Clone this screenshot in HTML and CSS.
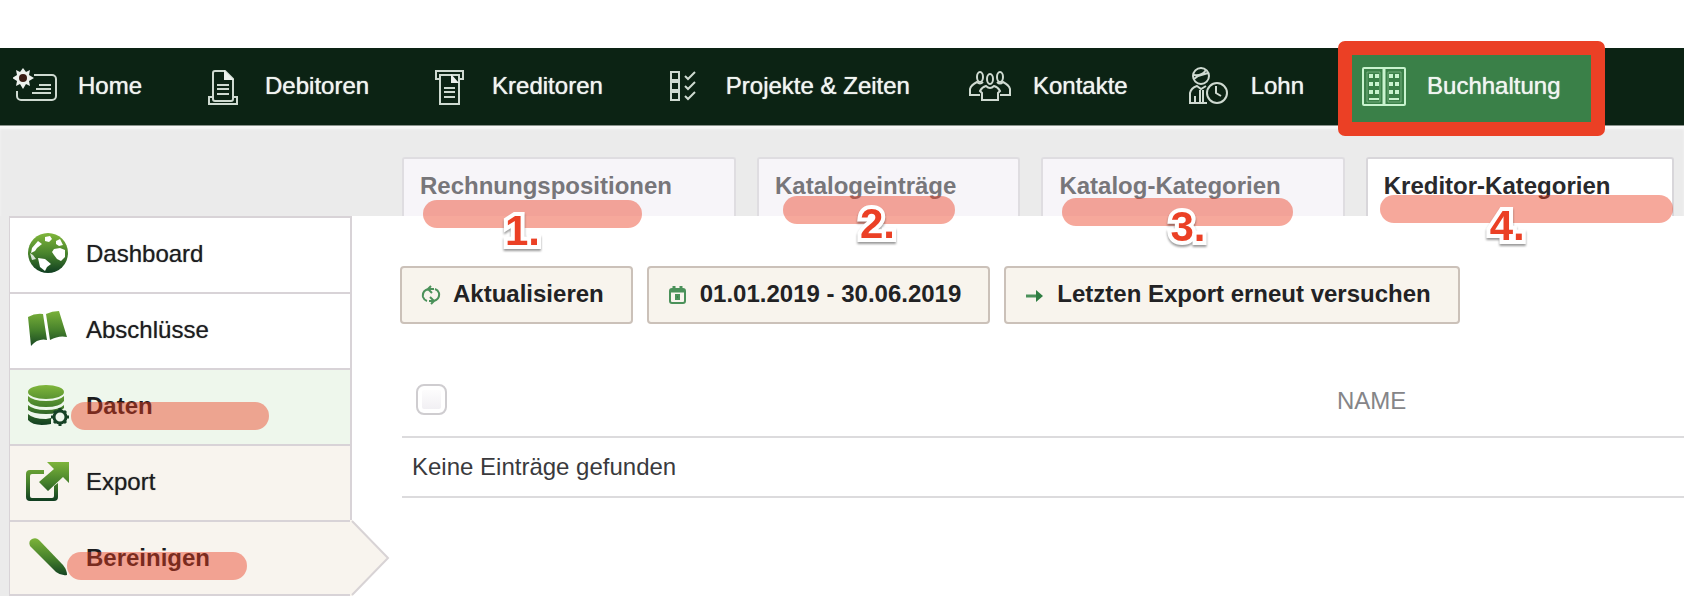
FILE: index.html
```html
<!DOCTYPE html>
<html lang="de">
<head>
    <meta charset="UTF-8">
    <meta name="viewport" content="width=device-width, initial-scale=1.0">
    <title>Buchhaltung - Kreditor-Kategorien</title>
    <link rel="stylesheet" href="styles.css">
</head>
<body>
    <nav class="topnav">
        <a class="nav-item" href="#">
            <svg class="nav-icon" viewBox="0 0 44 44">
                <path d="M21 11h18a4 4 0 0 1 4 4v17a4 4 0 0 1-4 4H8a4 4 0 0 1-4-4v-5" stroke-width="2"/>
                <path d="M26 21h12M23 25h15M19 29h19" stroke-width="2"/>
                <path class="fill" d="M10 4l3 4 4-2-1 5 5 3-5 3 1 5-4-2-3 5-3-5-4 2 1-5-5-3 5-3-1-5 4 2z"/>
                <circle cx="10" cy="14" r="4" fill="#3a1c14" stroke="none"/>
            </svg>
            <span>Home</span>
        </a>
        <a class="nav-item" href="#">
            <svg class="nav-icon" viewBox="0 0 44 44">
                <path d="M13 35V9a2 2 0 0 1 2-2h10l8 8v20a2 2 0 0 1-2 2H15a2 2 0 0 1-2-2z" stroke-width="2"/>
                <path class="fill" d="M24 6l10 10H24z"/>
                <path d="M17 21h12M17 25h12M17 30h12" stroke-width="2"/>
                <path d="M12 33H9v7h28v-7h-3" stroke-width="2"/>
            </svg>
            <span>Debitoren</span>
        </a>
        <a class="nav-item" href="#">
            <svg class="nav-icon" viewBox="0 0 44 44">
                <path d="M12 15H9V7h27v8h-3" stroke-width="2"/>
                <path d="M13 11h19v29H13z" stroke-width="2"/>
                <path class="fill" d="M24 10l8 9h-8z"/>
                <path d="M17 24h11M17 28h11M17 33h11" stroke-width="2"/>
            </svg>
            <span>Kreditoren</span>
        </a>
        <a class="nav-item" href="#">
            <svg class="nav-icon" viewBox="0 0 44 44">
                <path d="M10 8h8v8h-8zM10 18h8v8h-8zM10 28h8v8h-8z" stroke-width="2"/>
                <path d="M24 12l3 3 7-7M24 22l3 3 7-7M24 32l3 3 7-7" stroke-width="2"/>
            </svg>
            <span>Projekte &amp; Zeiten</span>
        </a>
        <a class="nav-item" href="#">
            <svg class="nav-icon" viewBox="0 0 44 44">
                <ellipse cx="12" cy="13" rx="3" ry="5"/>
                <ellipse cx="22" cy="15" rx="3" ry="5"/>
                <ellipse cx="32" cy="13" rx="3" ry="5"/>
                <path d="M12 31H2v-6q1-4 7-7 3 3 6 0M32 31h10v-6q-1-4-7-7-3 3-6 0"/>
                <path d="M14 36v-7l-2-2q2-4 6-5 4 4 8 0 4 1 6 5l-2 2v7z"/>
            </svg>
            <span>Kontakte</span>
        </a>
        <a class="nav-item" href="#">
            <svg class="nav-icon" viewBox="0 0 44 44">
                <circle cx="15" cy="12" r="8"/>
                <path d="M8 11q8 1 12-5M8 15l4-3 10-3"/>
                <path d="M21 39H4V29q1-5 7-7l4 3 5-3M9 32v7M14 26v13M17 26v13"/>
                <circle cx="31" cy="29" r="10"/>
                <path d="M30 22v7l5 3"/>
            </svg>
            <span>Lohn</span>
        </a>
        <a class="nav-item active" href="#">
            <svg class="nav-icon" viewBox="0 0 44 44">
                <rect x="1" y="4" width="42" height="37" rx="1" stroke-width="2"/>
                <path d="M22 4v37" stroke-width="3"/>
                <path d="M5 38V8h13v30zM26 38V8h13v30z" stroke-width="1" opacity=".4"/>
                <path d="M7 12h4m2 0h4M7 20h4m2 0h4M7 28h4m2 0h4M27 12h4m2 0h4M27 20h4m2 0h4M27 28h4m2 0h4" stroke-width="4"/>
                <path d="M7 35h10M27 35h10" stroke-width="2"/>
            </svg>
            <span>Buchhaltung</span>
        </a>
    </nav>

    <div class="tabs">
        <a class="tab" href="#">Rechnungspositionen<span class="marker marker-1"><b>1.</b></span></a>
        <a class="tab" href="#">Katalogeinträge<span class="marker marker-2"><b>2.</b></span></a>
        <a class="tab" href="#">Katalog-Kategorien<span class="marker marker-3"><b>3.</b></span></a>
        <a class="tab active" href="#">Kreditor-Kategorien<span class="marker marker-4"><b>4.</b></span></a>
    </div>

    <div class="workspace">
        <aside class="sidebar">
            <svg class="defs" width="0" height="0">
                <linearGradient id="leaf" gradientUnits="userSpaceOnUse" x1="0" y1="2" x2="0" y2="42">
                    <stop offset="0" stop-color="#7db43a"/>
                    <stop offset=".5" stop-color="#47822c"/>
                    <stop offset="1" stop-color="#0d3a20"/>
                </linearGradient>
            </svg>
            <a class="side-item" href="#">
                <svg class="side-icon" viewBox="0 0 44 44">
                    <circle cx="22" cy="21" r="20"/>
                    <path fill="#fff" d="M6 16l6-7 4 3-5 4-2 3-4 2zM19 5l5-1 2 3-3 3-4-1zM30 9l4-2 3 6-4 1-3-2zM28 17l6-1 5 2v7l-4 4-4-2-3-4-2-3zM12 26l7 1 6 5-4 3-2 4-5-4z"/>
                    <path fill="#fff" d="M4 21l3 2 3 4-4 1z" opacity=".8"/>
                </svg>
                <span>Dashboard</span>
            </a>
            <a class="side-item" href="#">
                <svg class="side-icon" viewBox="0 0 44 44">
                    <path d="M2 9q7-4 15-3l4 26q-9-2-16 6zM20 6q6-3 13-3l8 26q-8-2-17 3z"/>
                </svg>
                <span>Abschlüsse</span>
            </a>
            <a class="side-item current" href="#">
                <svg class="side-icon" viewBox="0 0 44 44">
                    <ellipse cx="20" cy="8" rx="18" ry="7"/>
                    <path d="M2 12q5 5 18 5t18-5v5q-4 6-18 6T2 17zM2 21q5 5 18 5t18-5v3q-5 6-18 6T2 26zM2 30q5 5 18 5l5-1v6q-17 3-23-4z"/>
                    <circle cx="34" cy="33" r="6" fill="none" stroke="#164326" stroke-width="3"/>
                    <path d="M34 24v4m0 10v4m-9-9h4m10 0h4M28 27l2 2m8 8l2 2m0-12l-2 2m-8 8l-2 2" stroke="#164326" stroke-width="3"/>
                </svg>
                <span>Daten</span>
                <i class="marker marker-data"></i>
            </a>
            <a class="side-item sub" href="#">
                <svg class="side-icon" viewBox="0 0 44 44">
                    <path d="M18 10v4H6q-2 0-2 2v20q0 2 2 2h20q2 0 2-2V26l4-3v14q0 4-4 4H4q-4 0-4-4V14q0-4 4-4z"/>
                    <path d="M21 2h22v21l-6-6-15 14-9-9 15-13z"/>
                </svg>
                <span>Export</span>
            </a>
            <a class="side-item sub current last" href="#">
                <svg class="side-icon" viewBox="0 0 44 44">
                    <path d="M4 10q-2-5 2-7 4-2 7 1l24 25q4 5 4 10-6 1-11-3z"/>
                </svg>
                <span>Bereinigen</span>
                <i class="marker marker-clean"></i>
                <svg class="arrow" viewBox="0 0 40 76">
                    <path d="M0 0h2l36 38-36 38H0z" fill="#f8f4ee"/>
                    <path d="M2 1l36 37L2 75" fill="none" stroke="#d8d3d5" stroke-width="2"/>
                </svg>
            </a>
        </aside>

        <main class="content">
            <div class="toolbar">
                <button class="btn" type="button">
                    <svg class="btn-icon" viewBox="0 0 20 20">
                        <path d="M7 4Q1 6 2 12q1 3 4 4M13 16q6-2 5-8-1-3-4-4M10 1L7 4l4 4M7 4h6M10 19l3-3-4-4M13 16H8"/>
                    </svg>
                    Aktualisieren
                </button>
                <button class="btn" type="button">
                    <svg class="btn-icon" viewBox="0 0 20 20">
                        <rect x="2" y="4" width="15" height="14" rx="2"/>
                        <path d="M2 6h15M6 1v4M13 1v4" stroke-width="3"/>
                        <path d="M8 10h3v4H8z" fill="#3b8048"/>
                    </svg>
                    01.01.2019 - 30.06.2019
                </button>
                <button class="btn" type="button">
                    <svg class="btn-icon" viewBox="0 0 20 20">
                        <path d="M1 11h13" stroke-width="3"/>
                        <path d="M11 5l7 6-7 6z" fill="#2f7d42" stroke="none"/>
                    </svg>
                    Letzten Export erneut versuchen
                </button>
            </div>

            <table class="entries">
                <thead>
                    <tr>
                        <th class="col-check"><input class="check" type="checkbox" aria-label="Alle auswählen"></th>
                        <th>NAME</th>
                    </tr>
                </thead>
                <tbody>
                    <tr>
                        <td colspan="2">Keine Einträge gefunden</td>
                    </tr>
                </tbody>
            </table>
        </main>
    </div>
</body>
</html>
```
FILE: styles.css
```css
* {
    margin: 0;
    padding: 0;
    box-sizing: border-box;
}

body {
    padding-top: 48px;
    background: #fff;
    color: #1c1c1e;
    font-family: "Liberation Sans", Arial, Helvetica, sans-serif;
    font-size: 24px;
    line-height: 28px;
}

a {
    color: inherit;
    text-decoration: none;
}

/* top navigation */
.topnav {
    position: relative;
    z-index: 2;
    display: flex;
    gap: 18px;
    padding: 7px 3px 3px;
    background: #0c2314;
    color: #f1f5f1;
    border-bottom: 1px solid #8b938d;
    white-space: nowrap;
}

.nav-item {
    position: relative;
    display: flex;
    align-items: center;
    gap: 21px;
    height: 67px;
    padding: 0 30px 5px 10px;
    text-shadow: 0 0 1px #f1f5f1;
}

.nav-item.active {
    background: #3a8048;
}

.nav-item.active::after {
    content: "";
    position: absolute;
    inset: -14px;
    border: 14px solid #eb4025;
    border-radius: 7px;
}

.nav-icon {
    flex: none;
    width: 44px;
    height: 44px;
    fill: none;
    stroke: #cfdad1;
    stroke-width: 2;
}

.nav-icon .fill {
    fill: #edf1ed;
    stroke: none;
}

.active .nav-icon {
    stroke: #c9f3cf;
}

/* tabs */
.tabs {
    position: relative;
    z-index: 1;
    display: flex;
    gap: 21px;
    padding: 31px 8px 0 402px;
    background: #ebebeb;
    box-shadow: inset 0 3px 2px #f8f8f8;
    white-space: nowrap;
}

.tab {
    position: relative;
    height: 59px;
    padding: 13px 62px 0 16px;
    background: #f7f5f9;
    border: 2px solid #dfdde1;
    border-bottom: 0;
    border-radius: 3px 3px 0 0;
    color: #77767a;
    font-weight: bold;
}

.tab.active {
    background: #fff;
    border-color: #d8d6da;
    color: #29292c;
}

/* red marker strokes with step numbers */
.marker {
    position: absolute;
    height: 28px;
    border-radius: 14px;
    background: rgba(234, 62, 34, 0.45);
}

.marker b {
    position: absolute;
    color: #eb4025;
    font-size: 42px;
    line-height: 42px;
    -webkit-text-stroke: 8px #fff;
    paint-order: stroke fill;
    stroke-linejoin: round;
    filter: drop-shadow(0 2px 1px rgba(0, 0, 0, 0.4));
}

.marker-1 {
    left: 19px;
    top: 41px;
    width: 219px;
}

.marker-1 b {
    left: 82px;
    top: 10px;
}

.marker-2 {
    left: 24px;
    top: 37px;
    width: 172px;
}

.marker-2 b {
    left: 77px;
    top: 7px;
}

.marker-3 {
    left: 19px;
    top: 39px;
    width: 231px;
}

.marker-3 b {
    left: 108px;
    top: 8px;
}

.marker-4 {
    left: 12px;
    top: 36px;
    width: 293px;
}

.marker-4 b {
    left: 110px;
    top: 10px;
}

.marker-data {
    left: 61px;
    top: 32px;
    width: 198px;
}

.marker-clean {
    left: 57px;
    top: 30px;
    width: 180px;
}

/* sidebar */
.workspace {
    display: flex;
    padding-left: 9px;
    background: #ebebeb;
}

.sidebar {
    flex: none;
    width: 343px;
    border: 2px solid #d8d3d7;
    border-width: 2px 0 0 1px;
}

.defs {
    position: absolute;
}

.side-item {
    position: relative;
    display: flex;
    align-items: center;
    gap: 16px;
    height: 76px;
    padding: 0 16px 2px;
    background: #fff;
    border-right: 2px solid #d8d3d7;
    border-bottom: 2px solid #d8d3d7;
    text-shadow: 0 0 1px #77777a;
}

.side-item.current {
    background: #eef7ec;
    font-weight: bold;
    text-shadow: none;
}

.side-item.sub {
    background: #f8f4ee;
}

.side-item.last {
    height: 74px;
    padding-bottom: 0;
    border-right: 0;
}

.side-icon {
    flex: none;
    width: 44px;
    height: 44px;
    fill: url(#leaf);
}

.arrow {
    position: absolute;
    left: 340px;
    top: -2px;
    width: 40px;
    height: 76px;
}

/* content */
.content {
    flex: 1;
    min-width: 0;
    padding: 50px 0 0 48px;
    background: #fff;
}

.toolbar {
    display: flex;
    gap: 14px;
}

.btn {
    display: flex;
    align-items: center;
    gap: 12px;
    height: 58px;
    padding: 0 27px 2px 19px;
    background: #f8f4ed;
    border: 2px solid #cbc1b9;
    border-radius: 4px;
    color: #222224;
    font: inherit;
    font-weight: bold;
    white-space: nowrap;
}

.btn-icon {
    flex: none;
    width: 20px;
    height: 20px;
    margin-top: 2px;
    fill: none;
    stroke: #4b915a;
    stroke-width: 2;
}

.entries {
    width: 100%;
    margin-top: 38px;
    padding-left: 2px;
    border-spacing: 0;
    text-align: left;
}

.entries th {
    height: 76px;
    padding: 3px 12px 0;
    border-bottom: 2px solid #dcdbdd;
    color: #858588;
    font-weight: normal;
}

.entries .col-check {
    width: 72%;
    padding: 0 14px;
}

.entries td {
    height: 60px;
    padding: 0 10px;
    border-bottom: 2px solid #dcdbdd;
    color: #3a3a3d;
}

.check {
    display: block;
    appearance: none;
    width: 31px;
    height: 31px;
    border: 2px solid #cfcdd0;
    border-radius: 8px;
    background: linear-gradient(#fff, #efedf1);
    box-shadow: inset 0 0 0 4px #fff;
}
```
